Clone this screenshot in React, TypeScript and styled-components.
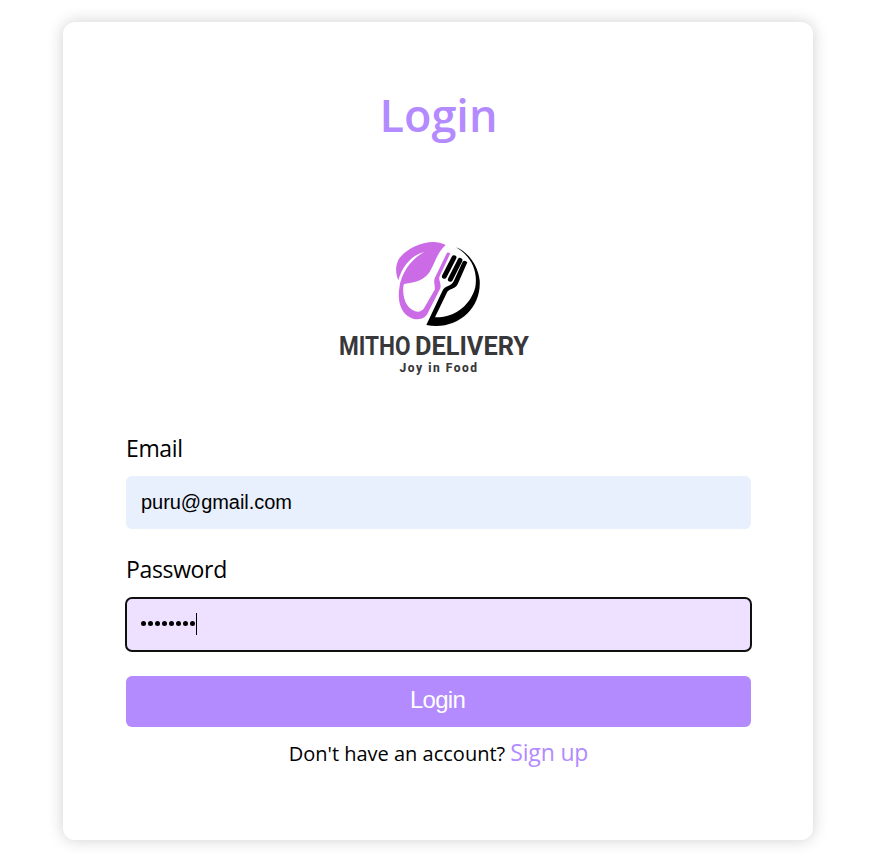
import React from "react";
import styled, { createGlobalStyle } from "styled-components";

const GlobalStyle = createGlobalStyle`
  *, *::before, *::after { box-sizing: border-box; }
  body { margin: 0; background: #fff; font-family: "Open Sans", "Noto Sans", sans-serif; color: #000; }
`;

const Page = styled.main`
  display: flex;
  height: 863px;
  padding: 22px 0 0 63px;
  overflow: hidden;
`;

const Card = styled.form`
  display: flex;
  flex-direction: column;
  width: 750px;
  height: 818px;
  padding: 61px 62px 0 63px;
  border-radius: 12px;
  background: #fff;
  box-shadow: 0 0 16px rgba(0, 0, 0, 0.19);
`;

const Title = styled.h1`
  margin: 0;
  height: 64px;
  text-align: center;
  font-size: 45px;
  line-height: 64px;
  font-weight: 600;
  color: #b38bff;
`;

const LogoFrame = styled.div`
  display: flex;
  justify-content: center;
  height: 251px;
  margin-top: 33px;
  padding: 50px 8px 0 0;
  svg { display: block; overflow: visible; }
`;

const Field = styled.div<{ $labelGap: number; $gap: number }>`
  display: flex;
  flex-direction: column;
  gap: ${(p) => p.$labelGap}px;
  margin-bottom: ${(p) => p.$gap}px;
`;

const Label = styled.label`
  height: 35px;
  font-size: 23px;
  line-height: 35px;
  letter-spacing: -0.35px;
`;

const InputBox = styled.div<{ $focused?: boolean }>`
  display: flex;
  align-items: center;
  height: 53px;
  padding: 0 15px 2px;
  border-radius: 6px;
  background: ${(p) => (p.$focused ? "#ede1ff" : "#e8f0fe")};
  outline: ${(p) => (p.$focused ? "2px solid #101010" : "none")};
  outline-offset: -1px;
  font: 20px/24px "Liberation Sans", Arial, sans-serif;
  letter-spacing: -0.04px;
`;

const Dots = styled.span`
  display: flex;
  gap: 2px;
`;

const Dot = styled.i`
  width: 5px;
  height: 5px;
  border-radius: 50%;
  background: #000;
`;

const Caret = styled.i`
  width: 1px;
  height: 22px;
  margin-left: 1px;
  background: #000;
`;

const Submit = styled.button`
  height: 51px;
  padding: 0 2px 3px 0;
  border: 0;
  border-radius: 6px;
  background: #b38bff;
  color: #fff;
  font: 24px/28px "Liberation Sans", Arial, sans-serif;
  letter-spacing: -0.7px;
`;

const Footer = styled.p`
  display: flex;
  justify-content: center;
  align-items: baseline;
  gap: 5px;
  margin: 8px 0 0;
  font-size: 20px;
  line-height: 35px;
  white-space: nowrap;
`;

const SignUp = styled.a`
  font-size: 23px;
  letter-spacing: -0.15px;
  color: #b38bff;
`;

const Logo = () => (
  <svg width="210" height="150" viewBox="330 230 210 150" role="img" aria-label="Mitho Delivery">
    <g transform="translate(385 230) scale(.33333)">
      <path fill="#cb6ce6" d="M40 151C31 128 30 107 43 85C67 52 136 20 182 45C160 64 152 91 140 115C124 150 93 158 57 162C52 177 54 207 67 226C82 246 105 253 117 235L149 179C151 169 145 158 149 145L186 68Q190 66 196 70L164 139C159 150 170 160 166 175L128 250C118 270 95 271 77 263C46 249 37 210 43 174C48 128 82 83 119 66C78 75 51 111 40 151Z" />
      <path fill="#000" d="M233 95Q240 89 247 97L220 158C212 178 198 173 187 185L150 262C211 264 258 223 271 171C279 123 259 79 213 52C251 67 279 107 284 151C290 236 214 303 124 285L171 185C181 164 198 171 206 154Z" />
      <path fill="none" stroke="#000" strokeWidth="14.5" strokeLinecap="round" d="M207 83L178 139M225 91L196 148" />
    </g>
    <g fill="#38383a" fontFamily="Roboto, sans-serif" fontWeight="700">
      <text x="339" y="354.5" fontSize="25" textLength="71.5" lengthAdjust="spacingAndGlyphs">MITHO</text>
      <text x="415" y="354.5" fontSize="25" textLength="114" lengthAdjust="spacingAndGlyphs">DELIVERY</text>
      <text x="399.5" y="371.5" fontSize="12" fontWeight="800" textLength="77.5">Joy in Food</text>
    </g>
  </svg>
);

export default function App() {
  return (
    <>
      <GlobalStyle />
      <Page>
        <Card>
          <Title>Login</Title>
          <LogoFrame><Logo /></LogoFrame>
          <Field $labelGap={10} $gap={23}>
            <Label>Email</Label>
            <InputBox>puru@gmail.com</InputBox>
          </Field>
          <Field $labelGap={11} $gap={25}>
            <Label>Password</Label>
            <InputBox $focused>
              <Dots>{Array.from({ length: 8 }, (_, i) => <Dot key={i} />)}</Dots>
              <Caret />
            </InputBox>
          </Field>
          <Submit type="button">Login</Submit>
          <Footer>Don't have an account? <SignUp>Sign up</SignUp></Footer>
        </Card>
      </Page>
    </>
  );
}
